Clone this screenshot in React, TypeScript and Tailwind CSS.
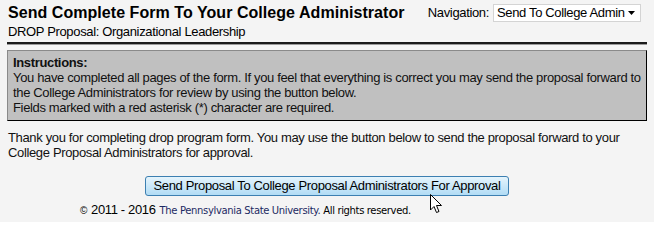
import React from 'react';

const Cursor: React.FC = () => (
  <svg className="absolute left-[430px] top-[194px]" width="14" height="21" viewBox="0 0 14 21">
    <path d="M0.5 0.5 L0.5 16 L4 12.5 L6.5 18.5 L9 17.5 L6.5 11.5 L11.5 11.5 Z" fill="#fff" stroke="#000" strokeWidth="1" strokeLinejoin="miter" />
  </svg>
);

const App: React.FC = () => {
  return (
    <div className="relative w-[654px] h-[222px] bg-[#f4f4f4] text-black font-['Liberation_Sans',Arial,sans-serif] overflow-hidden tracking-[-0.35px]">
      <div className="px-[7px] pt-[3px]">
        <div className="flex justify-between items-start whitespace-nowrap">
          <div>
            <h1 className="text-[16px] leading-[20px] font-bold pl-[1px] tracking-[0.05px]">Send Complete Form To Your College Administrator</h1>
            <div className="text-[13px] leading-[16px] pl-[1px] pt-[1px]">DROP Proposal: Organizational Leadership</div>
          </div>
          <div className="flex items-center gap-[4px] text-[13px] pr-[6px]">
            <span>Navigation:</span>
            <div className="flex items-center justify-between w-[148px] h-[18px] bg-white border border-[#d4d4d4] pl-[3px] pr-[5px]">
              <span>Send To College Admin</span>
              <svg width="7" height="4" viewBox="0 0 7 4"><path d="M0 0 L7 0 L3.5 4 Z" fill="#000" /></svg>
            </div>
          </div>
        </div>
        <div className="mt-[2px] h-[2px] bg-[#1a1a1a] border-b border-[#9a9a9a] box-content"></div>
        <div className="mt-[5px] bg-[#c0c0c0] border border-t-[#8a8a8a] border-l-[#8a8a8a] border-r-black border-b-black px-[5px] pt-[4px] pb-[5px] text-[13px] leading-[15px] text-[#111]">
          <div className="font-bold">Instructions:</div>
          <div>You have completed all pages of the form. If you feel that everything is correct you may send the proposal forward to the College Administrators for review by using the button below.</div>
          <div>Fields marked with a red asterisk (*) character are required.</div>
        </div>
        <p className="mt-[9px] pl-[1px] text-[13px] leading-[15px] text-[#111]">
          Thank you for completing drop program form. You may use the button below to send the proposal forward to your College Proposal Administrators for approval.
        </p>
        <div className="flex justify-center mt-[16px]">
          <button className="h-[20px] px-[8px] text-[13px] leading-[18px] text-black rounded-[3px] border border-[#3c7fb1] bg-gradient-to-b from-[#e5f4fc] to-[#b1dcf5] whitespace-nowrap">
            Send Proposal To College Proposal Administrators For Approval
          </button>
        </div>
        <div className="pl-[73px] mt-[6px] flex items-baseline text-[13px] leading-[16px] whitespace-nowrap">
          <span className="text-[10px] mr-[4px]">©</span>
          <span>2011 - 2016</span>
          <span className="ml-[4px] text-[10px] text-[#1c2a63] font-['DejaVu_Sans',Verdana,sans-serif] tracking-[-0.35px]">The Pennsylvania State University.</span>
          <span className="ml-[3px] text-[10px] font-['DejaVu_Sans',Verdana,sans-serif] tracking-[-0.35px]">All rights reserved.</span>
        </div>
      </div>
      <Cursor />
    </div>
  );
};

export default App;
